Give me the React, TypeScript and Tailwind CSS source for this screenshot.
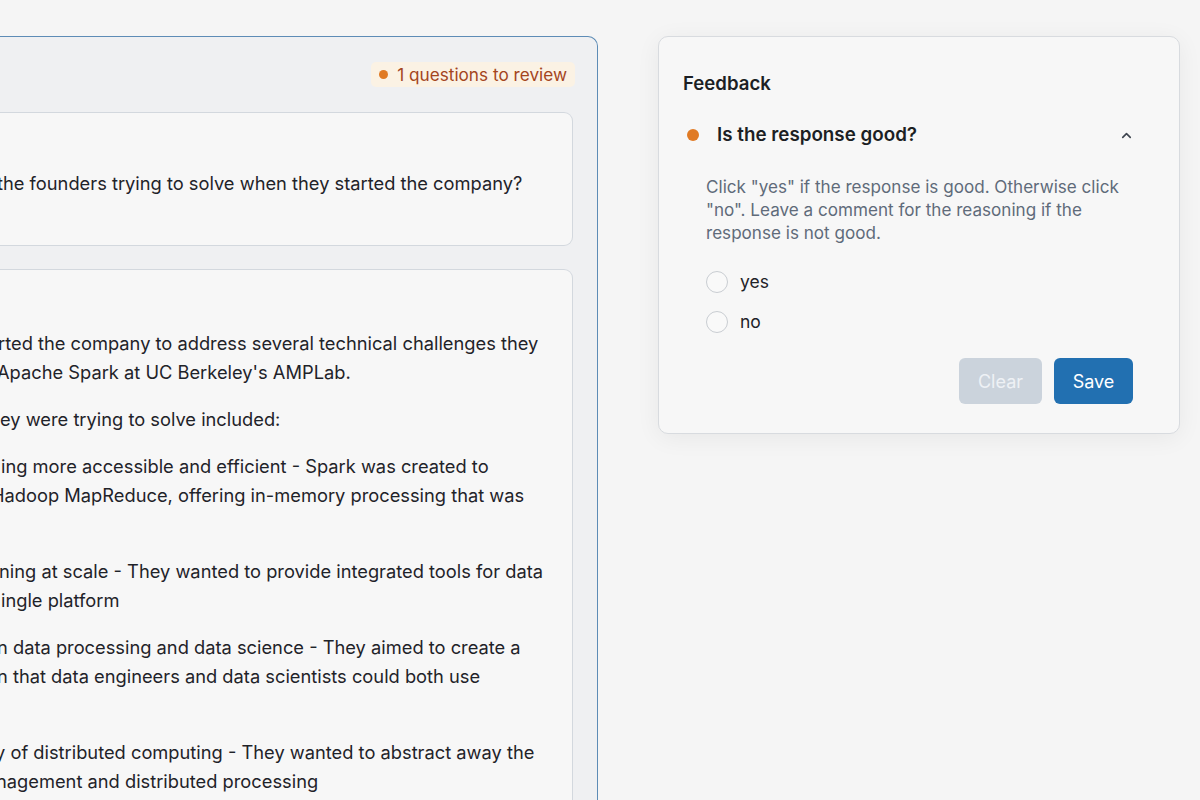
import React from "react";

const font = { fontFamily: "Inter, 'Noto Sans', 'Liberation Sans', sans-serif" };

type Line = { t: string; c: string };

const para1: Line[] = [
  { t: "rted the company to address several technical challenges they", c: "-ml-[2px]" },
  { t: "Apache Spark at UC Berkeley's AMPLab.", c: "-ml-[3px]" },
];
const para2: Line[] = [{ t: "ey were trying to solve included:", c: "ml-0" }];
const para3: Line[] = [
  { t: "ing more accessible and efficient - Spark was created to", c: "ml-[1px]" },
  { t: "Hadoop MapReduce, offering in-memory processing that was", c: "-ml-[9px]" },
  { t: "", c: "ml-0" },
];
const para4: Line[] = [
  { t: "ning at scale - They wanted to provide integrated tools for data", c: "-ml-[1px]" },
  { t: "ingle platform", c: "ml-[1px]" },
];
const para5: Line[] = [
  { t: "n data processing and data science - They aimed to create a", c: "-ml-[3px]" },
  { t: "n that data engineers and data scientists could both use", c: "-ml-[3px]" },
  { t: "", c: "ml-0" },
];
const para6: Line[] = [
  { t: "y of distributed computing - They wanted to abstract away the", c: "-ml-[5px]" },
  { t: "nagement and distributed processing", c: "-ml-[4px]" },
];

function Para({ lines, last }: { lines: Line[]; last?: boolean }) {
  return (
    <div className={last ? "" : "mb-[18px]"}>
      {lines.map((l, i) => (
        <div key={i} className={"h-[29px] leading-[29px] whitespace-nowrap " + l.c}>
          {l.t}
        </div>
      ))}
    </div>
  );
}

export default function App() {
  return (
    <div
      className="w-[1200px] h-[800px] overflow-hidden bg-[#f5f5f5] text-[#1f2329] flex items-start"
      style={font}
    >
      {/* Left panel (cropped off the left edge) */}
      <div className="shrink-0 w-[598px] mt-[36px] h-[800px] bg-[#eff0f2] border-[1.5px] border-l-0 border-b-0 border-[#5d8cb6] rounded-tr-[10px] pr-[24px] flex flex-col">
        <div className="flex justify-end pt-[25px]">
          <div className="h-[25px] px-[8px] mr-[-2px] rounded-[5px] bg-[#fbf2e4] flex items-center gap-[9px] text-[17.2px] text-[#a4451d]">
            <span className="w-[9px] h-[9px] rounded-full bg-[#e07a24]" />
            <span>1 questions to review</span>
          </div>
        </div>

        <div className="mt-[25px] h-[134px] bg-[#f7f7f7] border border-l-0 border-[#d3d8de] rounded-r-[9px] flex items-center overflow-hidden text-[18.3px]">
          <div className="-ml-[3px] whitespace-nowrap pt-[10px]">
            the founders trying to solve when they started the company?
          </div>
        </div>

        <div className="mt-[23px] flex-1 bg-[#f7f7f7] border border-l-0 border-[#d3d8de] rounded-tr-[9px] overflow-hidden text-[18.3px] pt-[59px]">
          <Para lines={para1} />
          <Para lines={para2} />
          <Para lines={para3} />
          <Para lines={para4} />
          <Para lines={para5} />
          <Para lines={para6} last />
        </div>
      </div>

      {/* Feedback card */}
      <div className="shrink-0 ml-[60px] mt-[36px] w-[522px] h-[398px] bg-[#f7f7f7] border border-[#d8dbdf] rounded-[10px] shadow-[0_4px_24px_rgba(0,0,0,0.06)] pl-[24px] pr-[46px] pt-[32px]">
        <div className="text-[18.6px] leading-[28px] font-semibold text-[#1c1f24]">Feedback</div>

        <div className="mt-[24px] flex items-center h-[28px]">
          <span className="ml-[4px] w-[12px] h-[12px] rounded-full bg-[#e07a24]" />
          <span className="ml-[18px] text-[18.8px] font-semibold text-[#1c1f24]">Is the response good?</span>
          <svg
            className="ml-auto -mr-[1px]"
            width="15"
            height="15"
            viewBox="0 0 24 24"
            fill="none"
            stroke="#3f4650"
            strokeWidth="2.6"
            strokeLinecap="round"
            strokeLinejoin="round"
          >
            <path d="M6 15l6-6 6 6" />
          </svg>
        </div>

        <div className="pl-[23px]">
          <p className="mt-[26px] text-[17.1px] leading-[23px] text-[#5f6b7a]">
            Click "yes" if the response is good. Otherwise click
            <br />
            "no". Leave a comment for the reasoning if the
            <br />
            response is not good.
          </p>

          <div className="mt-[27px] flex flex-col gap-[18px]">
            {["yes", "no"].map((o) => (
              <label key={o} className="flex items-center h-[22px]">
                <span className="w-[22px] h-[22px] rounded-full border-[1.5px] border-[#c9cdd2] bg-[#f9f9f9]" />
                <span className="ml-[12px] text-[17.5px] text-[#1f2329]">{o}</span>
              </label>
            ))}
          </div>

          <div className="mt-[25px] flex justify-end gap-[12px]">
            <button className="w-[83px] h-[46px] rounded-[6px] bg-[#cbd3dc] text-[#eef1f5] text-[18px]">
              Clear
            </button>
            <button className="w-[79px] h-[46px] rounded-[6px] bg-[#2270b1] text-white text-[18px]">
              Save
            </button>
          </div>
        </div>
      </div>
    </div>
  );
}
